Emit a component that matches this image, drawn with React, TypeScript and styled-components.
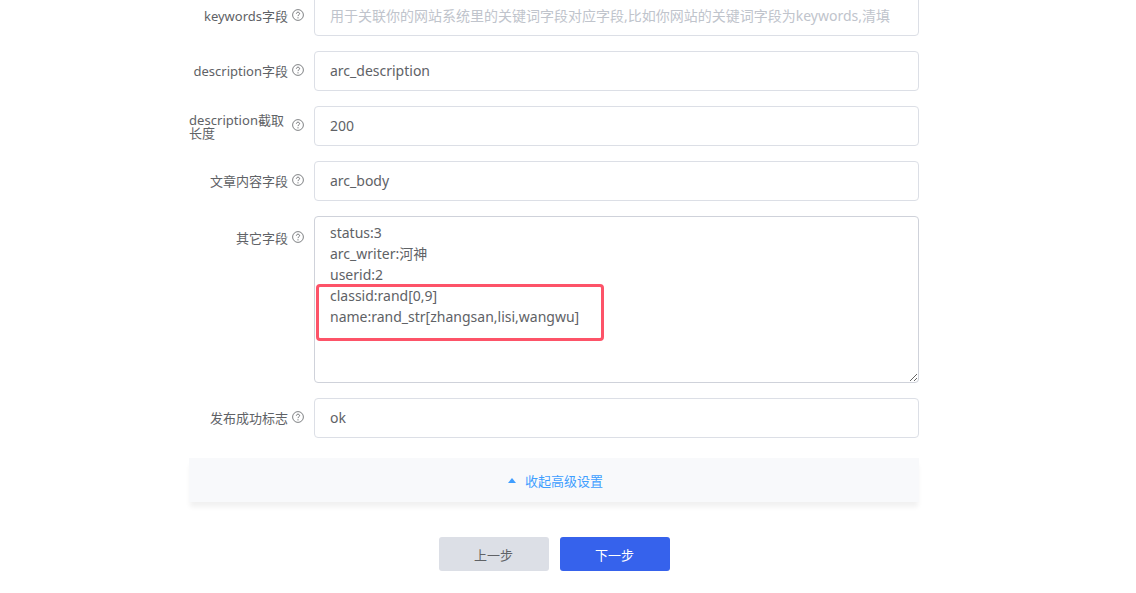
import React from "react";
import styled, { createGlobalStyle } from "styled-components";

const GlobalStyle = createGlobalStyle`
  html, body {
    margin: 0;
    padding: 0;
    height: 100%;
    overflow: hidden;
    background: #fff;
  }
`;

const FONT = `"Noto Sans", "Noto Sans CJK SC", sans-serif`;

const Page = styled.div`
  width: 1136px;
  height: 593px;
  overflow: hidden;
  font-family: ${FONT};
  background: #fff;
`;

const Form = styled.form`
  width: 730px;
  margin: -4px 0 0 189px;
  display: flex;
  flex-direction: column;
  gap: 15px;
`;

const Row = styled.div`
  display: flex;
  align-items: ${(p: { $top?: boolean }) => (p.$top ? "flex-start" : "center")};
`;

const LabelBox = styled.div<{ $top?: boolean }>`
  width: 125px;
  flex-shrink: 0;
  display: flex;
  align-items: center;
  justify-content: flex-end;
  padding-right: 10px;
  box-sizing: border-box;
  gap: 4px;
  padding-top: ${(p) => (p.$top ? "13px" : "0")};
`;

const LabelText = styled.label<{ $wrap?: boolean }>`
  font-size: 13px;
  line-height: ${(p) => (p.$wrap ? "13px" : "18px")};
  letter-spacing: ${(p) => (p.$wrap ? "0.05px" : "0")};
  color: #606266;
  text-align: ${(p) => (p.$wrap ? "left" : "right")};
  width: ${(p) => (p.$wrap ? "99px" : "auto")};
  white-space: ${(p) => (p.$wrap ? "normal" : "nowrap")};
  padding-top: ${(p) => (p.$wrap ? "1px" : "0")};
`;

const HelpIcon = styled.svg`
  width: 12px;
  height: 12px;
  flex-shrink: 0;
  margin-top: -2px;
  color: #606266;
`;

const TextInput = styled.input`
  width: 605px;
  height: 40px;
  box-sizing: border-box;
  border: 1px solid #dcdfe6;
  border-radius: 4px;
  padding: 0 28px 2px 15px;
  font-family: ${FONT};
  font-size: 14px;
  color: #606266;
  outline: none;
  background: #fff;

  &::placeholder {
    color: #c0c4cc;
    opacity: 1;
  }
`;

const AreaWrap = styled.div`
  position: relative;
  width: 605px;
  height: 167px;
`;

const TextArea = styled.textarea`
  display: block;
  width: 605px;
  height: 167px;
  box-sizing: border-box;
  border: 1px solid #cfd2da;
  border-radius: 4px;
  padding: 5px 15px;
  font-family: ${FONT};
  font-size: 14px;
  line-height: 21px;
  color: #606266;
  outline: none;
  resize: vertical;
  background: #fff;
`;

const Highlight = styled.div`
  position: absolute;
  left: 2px;
  top: 68px;
  width: 288px;
  height: 57px;
  box-sizing: border-box;
  border: 3px solid #fd5368;
  border-radius: 4px;
  pointer-events: none;
`;

const Advanced = styled.div`
  margin-top: 5px;
  height: 44px;
  background: #f8f9fb;
  box-shadow: 0 6px 5px -1px rgba(0, 0, 0, 0.06);
  display: flex;
  align-items: center;
  justify-content: center;
  gap: 9px;
  padding-left: 3px;
  font-size: 13px;
  color: #409eff;
`;

const Caret = styled.span`
  width: 0;
  height: 0;
  border-left: 4px solid transparent;
  border-right: 4px solid transparent;
  border-bottom: 5px solid #409eff;
`;

const Buttons = styled.div`
  margin-top: 20px;
  display: flex;
  justify-content: center;
  gap: 11px;
`;

const StepButton = styled.button<{ $primary?: boolean }>`
  width: 110px;
  height: 34px;
  border: none;
  border-radius: 3px;
  font-family: ${FONT};
  font-size: 13px;
  background: ${(p) => (p.$primary ? "#3662ec" : "#dcdfe6")};
  color: ${(p) => (p.$primary ? "#fff" : "#606266")};
`;

function Help() {
  return (
    <HelpIcon viewBox="0 0 12 12" fill="none">
      <circle cx="6" cy="6" r="5.4" stroke="currentColor" strokeWidth="0.8" />
      <path
        d="M4.4 4.7c0-.9.7-1.5 1.6-1.5s1.6.6 1.6 1.4c0 1.2-1.6 1.2-1.6 2.5"
        stroke="currentColor"
        strokeWidth="0.9"
      />
      <circle cx="6" cy="8.8" r="0.6" fill="currentColor" />
    </HelpIcon>
  );
}

const OTHER_FIELDS = `status:3
arc_writer:河神
userid:2
classid:rand[0,9]
name:rand_str[zhangsan,lisi,wangwu]`;

export default function App() {
  return (
    <Page>
      <GlobalStyle />
      <Form>
        <Row>
          <LabelBox>
            <LabelText>keywords字段</LabelText>
            <Help />
          </LabelBox>
          <TextInput placeholder="用于关联你的网站系统里的关键词字段对应字段,比如你网站的关键词字段为keywords,清填写keywords" />
        </Row>
        <Row>
          <LabelBox>
            <LabelText>description字段</LabelText>
            <Help />
          </LabelBox>
          <TextInput defaultValue="arc_description" />
        </Row>
        <Row>
          <LabelBox>
            <LabelText $wrap>description截取长度</LabelText>
            <Help />
          </LabelBox>
          <TextInput defaultValue="200" />
        </Row>
        <Row>
          <LabelBox>
            <LabelText>文章内容字段</LabelText>
            <Help />
          </LabelBox>
          <TextInput defaultValue="arc_body" />
        </Row>
        <Row $top>
          <LabelBox $top>
            <LabelText>其它字段</LabelText>
            <Help />
          </LabelBox>
          <AreaWrap>
            <TextArea defaultValue={OTHER_FIELDS} />
            <Highlight />
          </AreaWrap>
        </Row>
        <Row>
          <LabelBox>
            <LabelText>发布成功标志</LabelText>
            <Help />
          </LabelBox>
          <TextInput defaultValue="ok" />
        </Row>
        <Advanced>
          <Caret />
          收起高级设置
        </Advanced>
        <Buttons>
          <StepButton type="button">上一步</StepButton>
          <StepButton type="button" $primary>
            下一步
          </StepButton>
        </Buttons>
      </Form>
    </Page>
  );
}
